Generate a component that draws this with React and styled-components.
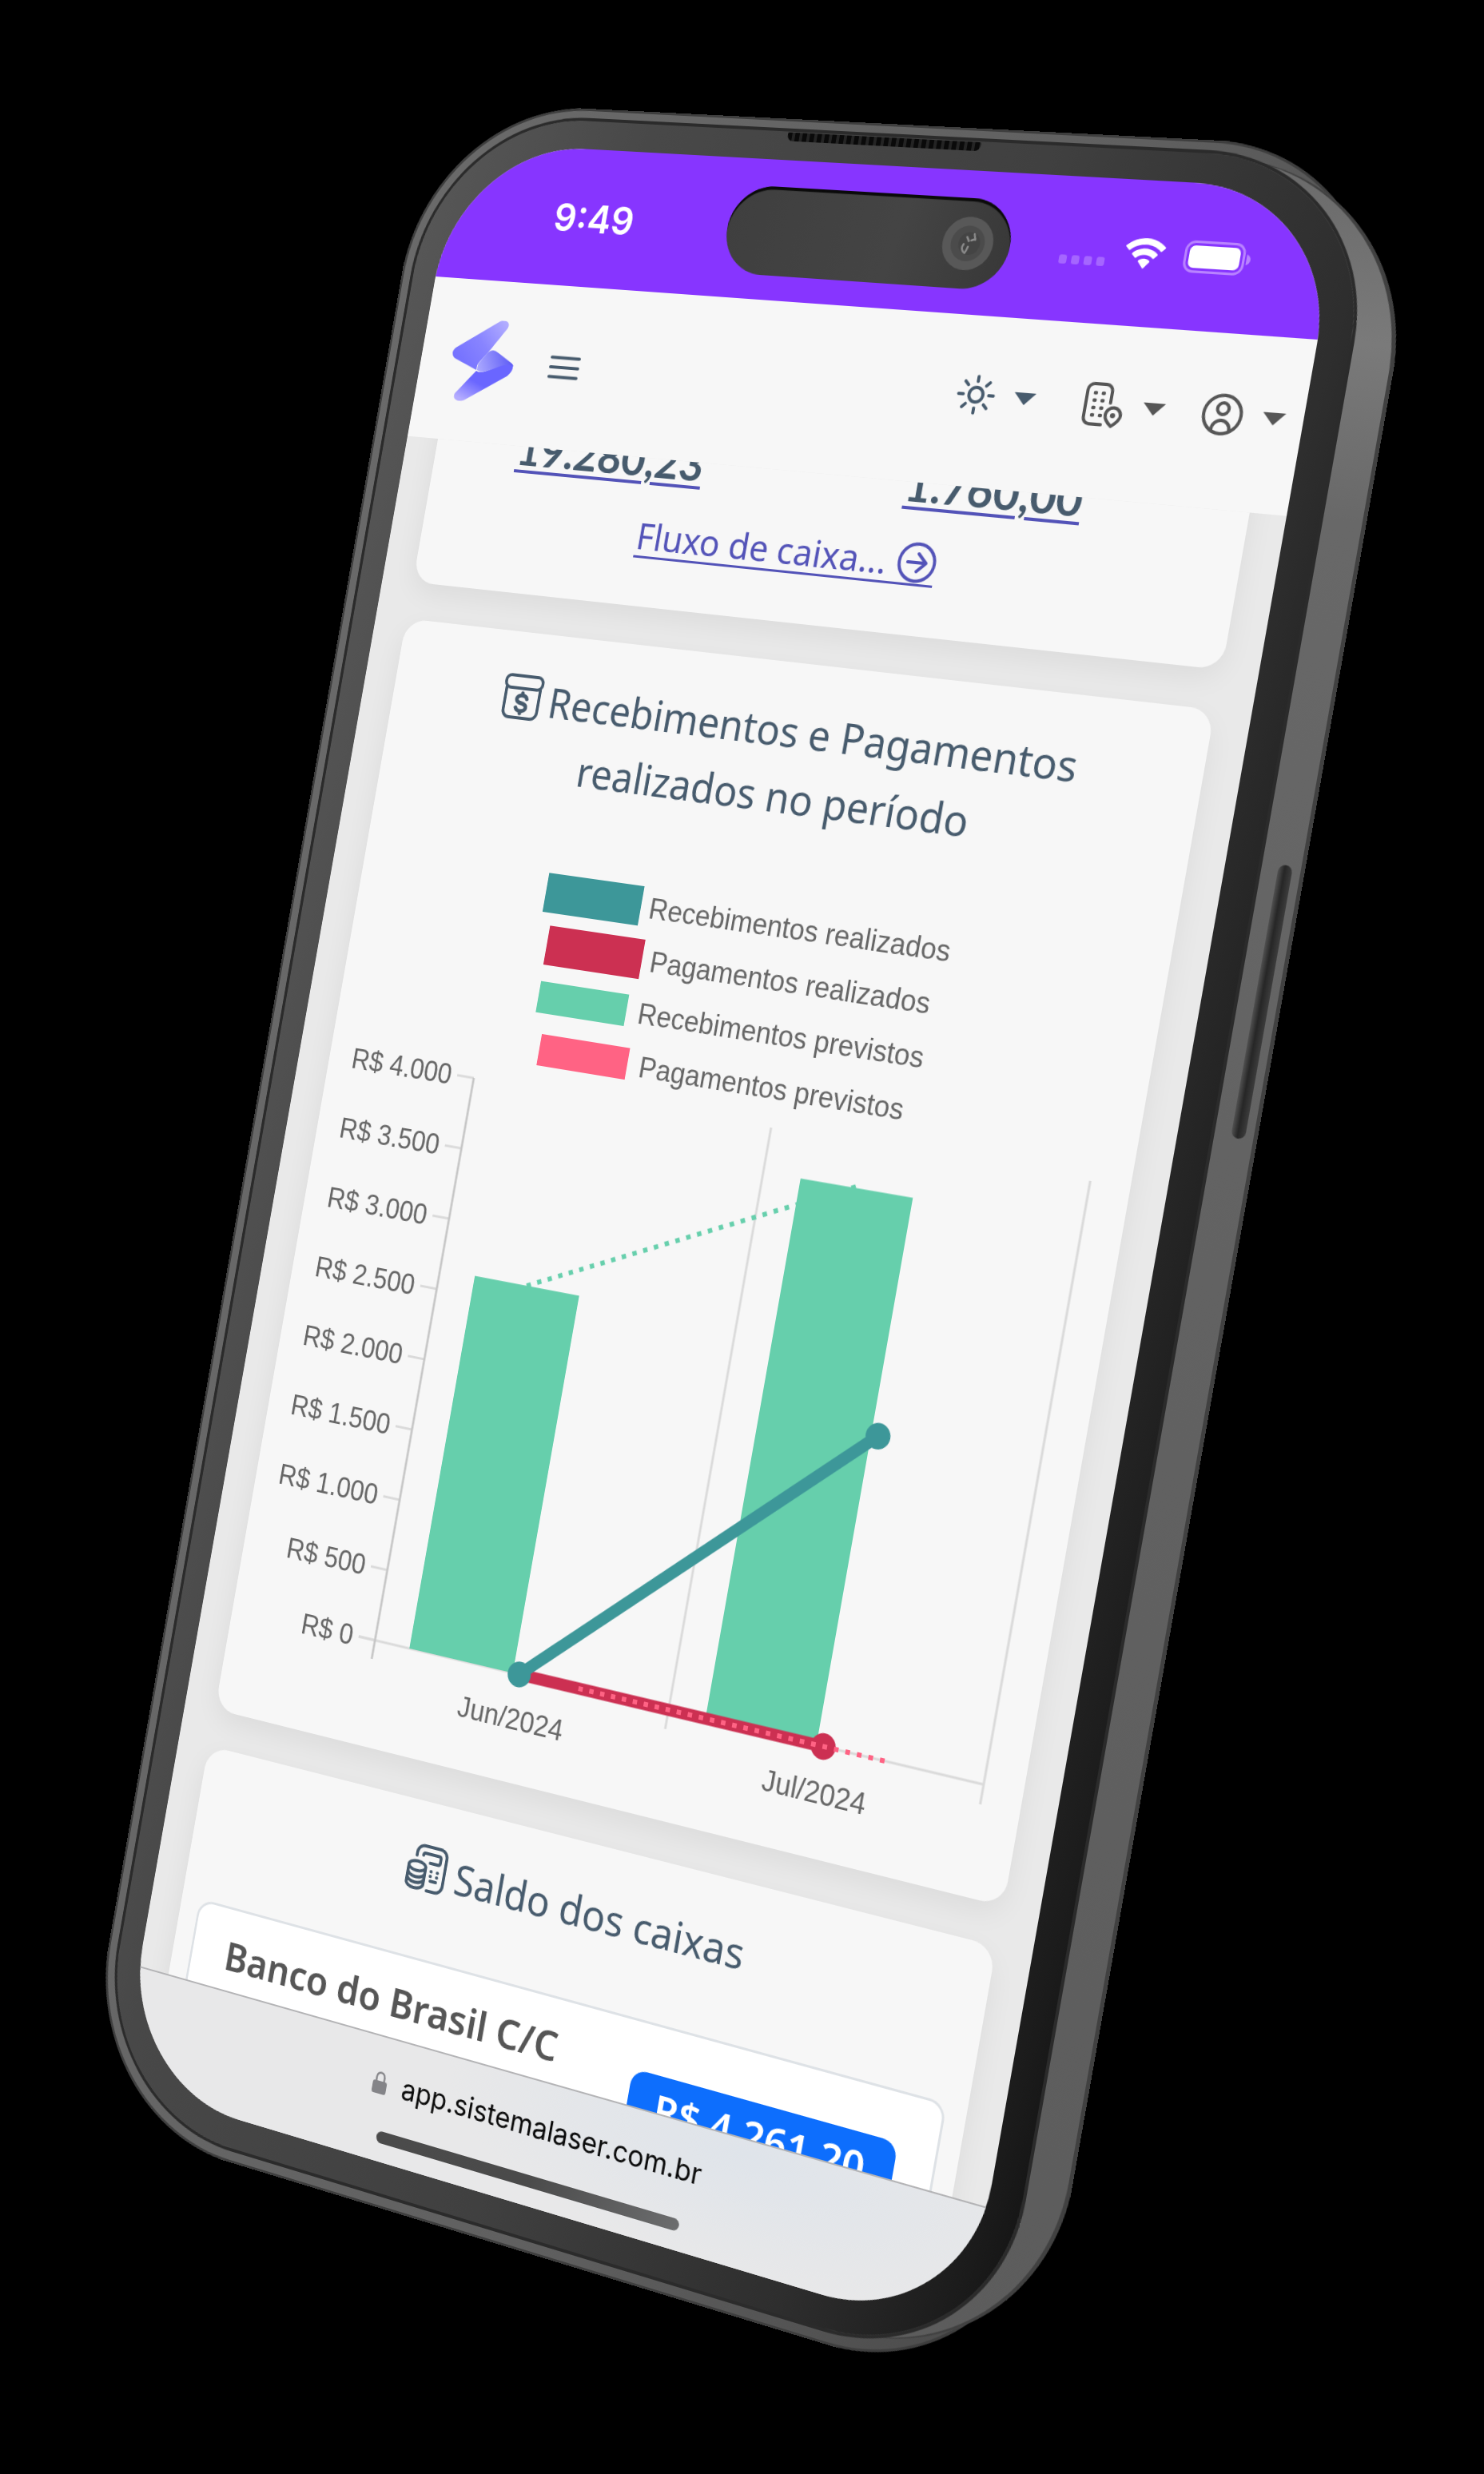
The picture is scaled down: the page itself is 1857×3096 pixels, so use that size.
import React from "react";
import styled, { createGlobalStyle } from "styled-components";

const GlobalStyle = createGlobalStyle`
  *, *::before, *::after { box-sizing: border-box; }
  html, body { margin: 0; background: #000; }
  body { overflow-x: hidden; }
  button { font: inherit; border: 0; background: none; padding: 0; color: inherit; cursor: pointer; }
  h2, ul, p { margin: 0; padding: 0; }
`;

const uiFont = `"Noto Sans", "Open Sans", sans-serif`;
const figureFont = `Lato, "Noto Sans", sans-serif`;
const systemFont = `Inter, Roboto, sans-serif`;
const chartFont = `"Liberation Sans", Arial, sans-serif`;

/* ---------- device ---------- */

const Page = styled.main`
  min-height: 100vh;
  display: grid;
  justify-content: center;
  padding: 130px 0;
  background: #000;
`;

const Stage = styled.div`
  width: 1633px;
  height: 2836px;
`;

/* Perspective of the phone; the screen's top left corner is the origin. */
const Device = styled.div`
  position: relative;
  width: max-content;
  padding: 16px 23px 18px 17px;
  border-radius: 230px;
  background: linear-gradient(97deg, #6a6a6a 0%, #606060 60%, #4c4c4c 97%, #444 100%);
  box-shadow: inset 0 0 0 3px #3e3e3e;
  transform-origin: 0 0;
  transform: translate(-112px, -130px)
    matrix3d(0.80254, 0.032502, 0, -0.000081188, -0.166263, 0.950971, 0, 0.0000010422, 0, 0, 1, 0, 574.43, 177.68, 0, 0.999816)
    translate(-50px, -52px);
  transform-style: flat;
`;

const Side = styled.div`
  position: absolute;
  z-index: -1;
  inset: 20px -33px 22px 300px;
  border-radius: 0 244px 244px 0;
  background: linear-gradient(180deg, #6a6a6a 0%, #7a7a7a 8%, #686868 16%, #626262 50%, #5c5c5c 100%);
  box-shadow: inset -5px 0 0 0 #414141;
`;

const PowerButton = styled.div`
  position: absolute;
  right: -18px;
  top: 846px;
  width: 17px;
  height: 324px;
  border-radius: 9px;
  background: linear-gradient(90deg, #505050, #262626 45%, #3c3c3c);
`;

const Glass = styled.div`
  position: relative;
  padding: 36px 40px 38px 33px;
  border-radius: 214px;
  background: linear-gradient(96deg, #575757 0%, #484848 20%, #404040 55%, #2e2e2e 82%, #1b1b1b 96%, #141414 100%);
  box-shadow: 0 0 0 4px #2b2b2b;
`;

const Speaker = styled.div`
  position: absolute;
  left: 493px;
  top: 1px;
  width: 258px;
  height: 11px;
  border-radius: 2px 2px 8px 8px;
  background: repeating-linear-gradient(90deg, #0a0a0a 0 6px, #242424 6px 10px);
`;

const Screen = styled.div`
  position: relative;
  display: flex;
  flex-direction: column;
  width: 1179px;
  height: 2562px;
  overflow: hidden;
  border-radius: 184px;
  background: #e9e9e9;
`;

/* ---------- status bar ---------- */

const StatusBar = styled.div`
  flex: none;
  height: 177px;
  padding: 0 98px 0 156px;
  display: flex;
  align-items: center;
  justify-content: space-between;
  background: #8735ff;
  color: #fff;
  font: 600 50px/60px ${systemFont};
`;

const StatusIcons = styled.div`
  display: flex;
  align-items: center;
  gap: 24px;
`;

const Signal = styled.div`
  display: flex;
  gap: 6px;
  margin-top: 26px;
`;

const SignalDot = styled.i`
  width: 10px;
  height: 11px;
  border-radius: 3px;
  background: #a566ff;
`;

const Island = styled.div`
  position: absolute;
  top: 34px;
  left: 400px;
  width: 378px;
  height: 112px;
  padding-right: 22px;
  display: flex;
  align-items: center;
  justify-content: flex-end;
  border-radius: 56px;
  background: linear-gradient(100deg, #3f3f3f, #444 60%, #383838);
  box-shadow: inset 0 4px 1px #0a0a0a;
`;

/* ---------- app header ---------- */

const AppHeader = styled.header`
  flex: none;
  height: 210px;
  padding: 0 22px 0 44px;
  display: flex;
  align-items: center;
  background: #f7f7f7;
`;

const MenuButton = styled.button`
  display: flex;
  margin-left: 50px;
  color: #475b6d;
`;

const HeaderActions = styled.div`
  display: flex;
  gap: 46px;
  margin: 0 0 16px auto;
`;

const ActionButton = styled.button`
  display: flex;
  align-items: center;
  gap: 24px;
  color: ${(p) => (p.$accent ? "#475b6d" : "#565656")};
  padding-right: ${(p) => (p.$accent ? "16px" : "0")};
`;

const Caret = styled.span`
  border: 14px solid transparent;
  border-top: 15px solid currentColor;
  border-bottom: 0;
`;

/* ---------- content ---------- */

const Viewport = styled.div`
  flex: 1;
  min-height: 0;
  overflow: hidden;
`;

const Feed = styled.div`
  display: flex;
  flex-direction: column;
  gap: 48px;
  margin-top: -138px;
  padding: 0 45px;
`;

const Card = styled.section`
  padding: ${(p) => p.$pad || "44px 0 43px"};
  border-radius: 30px;
  background: #f7f7f7;
  box-shadow: 0 12px 36px rgba(0, 0, 0, 0.06);
  text-align: center;
`;

const CardTitle = styled.h2`
  color: #475b6d;
  font: 400 52px/82px ${uiFont};

  svg {
    width: 58px;
    height: 60px;
    margin-right: 10px;
    vertical-align: -8px;
  }
`;

const Totals = styled.div`
  display: flex;
  justify-content: space-between;
  padding: 0 133px 0 117px;
`;

const TotalLink = styled.a`
  color: #475b6d;
  font: 700 58px/80px ${figureFont};
  text-decoration: underline #5353b8 4px;
  text-underline-offset: 6px;
`;

const FlowLink = styled.a`
  display: inline-flex;
  align-items: center;
  gap: 14px;
  margin-top: 30px;
  border-bottom: 3px solid #5353b8;
  color: #5353b8;
  font: 400 46px/52px ${uiFont};
  text-decoration: none;
`;

const Legend = styled.ul`
  margin-top: 99px;
  display: flex;
  flex-direction: column;
  align-items: center;
  gap: 30px;
  list-style: none;
`;

const LegendItem = styled.li`
  display: flex;
  gap: 18px;
  height: 36px;
  color: #666;
  font: 400 36px/40px ${chartFont};

  &::before {
    content: "";
    width: 120px;
    height: 36px;
    background: ${(p) => p.$color};
    box-shadow: 0 0 0 ${(p) => p.$ring} ${(p) => p.$color};
  }
`;

const Plot = styled.svg`
  display: block;
  width: 100%;

  text {
    fill: #666;
    font: 400 36px ${chartFont};
  }
`;

const AccountRow = styled.div`
  display: flex;
  align-items: flex-start;
  justify-content: space-between;
  height: 200px;
  margin: 69px 26px 0;
  padding: 18px 48px;
  border: 3px solid #dee2e6;
  border-radius: 22px;
  background: #fff;
  font: 600 51px/78px ${uiFont};
`;

const AccountName = styled.span`
  color: #565656;
`;

const Balance = styled.span`
  margin-top: 40px;
  padding: 0 36px;
  border-radius: 20px;
  background: #0d6efd;
  color: #fff;
`;

/* ---------- browser bar ---------- */

const BrowserBar = styled.footer`
  flex: none;
  height: 156px;
  padding-top: 34px;
  display: flex;
  flex-direction: column;
  align-items: center;
  gap: 38px;
  border-top: 2px solid #b4b4b6;
  background: radial-gradient(ellipse 420px 150px at 74% 10%, #dfe4ea, #e8e8e9);
`;

const Address = styled.div`
  display: flex;
  align-items: center;
  gap: 22px;
  color: #0a0a0a;
  font: 400 36px/44px ${systemFont};
`;

const HomeIndicator = styled.div`
  width: 422px;
  height: 15px;
  border-radius: 8px;
  background: linear-gradient(100deg, #4b4b4b, #4a4a4a 50%, #6c6d6e);
`;

/* ---------- drawings ---------- */

const Camera = () => (
  <svg width="66" height="66" viewBox="0 0 66 66">
    <circle cx="33" cy="33" r="33" fill="#585858" />
    <circle cx="33" cy="33" r="22" fill="#4b4b4b" />
    <circle cx="35" cy="33" r="14" fill="#444" />
    <path d="M31 25l3 5M40 21l2 7M37 29l5-2M28 34c-3 5-1 9 3 11M34 37l-2 6" stroke="#8c8c8c" strokeWidth="2.500" strokeLinecap="round" fill="none" />
  </svg>
);

const Wifi = () => (
  <svg width="50" height="37" viewBox="0 0 50 37" fill="#fff">
    <path d="M25 0C15.500 0 6.800 3.700.3 9.800c-.4.400-.4 1 0 1.400l4 4.100c.4.400 1 .4 1.400 0C10.800 10.600 17.600 7.800 25 7.800s14.200 2.800 19.300 7.500c.4.400 1 .4 1.400 0l4-4.100c.4-.4.4-1 0-1.400C43.200 3.700 34.500 0 25 0z" />
    <path d="M25 12.600c-6.100 0-11.700 2.300-15.900 6.200-.4.400-.4 1 0 1.400l4 4c.4.400 1 .4 1.400 0 2.800-2.500 6.500-4 10.500-4s7.700 1.500 10.500 4c.4.400 1 .4 1.400 0l4-4c.4-.4.4-1 0-1.400-4.200-3.900-9.800-6.200-15.900-6.200z" />
    <path d="M25 24.800c-2.700 0-5.200 1-7.100 2.600-.4.400-.4 1 0 1.400l6.400 7.600c.4.400 1 .4 1.400 0l6.400-7.600c.4-.4.400-1 0-1.400-1.900-1.600-4.400-2.600-7.100-2.600z" />
  </svg>
);

const Battery = () => (
  <svg width="82" height="39" viewBox="0 0 82 39">
    <rect x="1.500" y="1.500" width="72" height="36" rx="11" fill="none" stroke="#b983ff" strokeWidth="3" />
    <rect x="6" y="6" width="63" height="27" rx="7" fill="#fff" />
    <path d="M77 13c3 1 5 3.500 5 6.500s-2 5.500-5 6.500z" fill="#b983ff" />
  </svg>
);

const Logo = () => (
  <svg width="92" height="108" viewBox="0 0 92 108">
    <defs>
      <linearGradient id="lgTop" x1="70" y1="0" x2="10" y2="60" gradientUnits="userSpaceOnUse">
        <stop offset="0" stopColor="#b3aeff" />
        <stop offset="0.500" stopColor="#8884ff" />
        <stop offset="1" stopColor="#7370ff" />
      </linearGradient>
      <linearGradient id="lgMid" x1="40" y1="64" x2="84" y2="42" gradientUnits="userSpaceOnUse">
        <stop offset="0" stopColor="#aba9ff" />
        <stop offset="1" stopColor="#5e5cf5" />
      </linearGradient>
      <linearGradient id="lgLow" x1="50" y1="60" x2="32" y2="108" gradientUnits="userSpaceOnUse">
        <stop offset="0" stopColor="#6a66ff" />
        <stop offset="0.450" stopColor="#6a66ff" />
        <stop offset="1" stopColor="#b4acff" />
      </linearGradient>
    </defs>
    <path d="M39 67C46 72 62 62 72 58c8-3 16-6 18-2 2 5-1 11-6 15L29 106c-8 4-19 0-15-8z" fill="url(#lgLow)" />
    <path d="M51 43c4-5 9-5 14-2l20 11c4 2 6 4 6 6-6-4-16-1-24 3-10 4-19 9-27 5-2-8 4-14 11-23z" fill="url(#lgMid)" />
    <path d="M61 1c8-4 17 1 12 9L51 43c-7 9-14 15-12 23L5 53C-1 49-1 43 4 39z" fill="url(#lgTop)" />
  </svg>
);

const MenuIcon = () => (
  <svg width="43" height="30" viewBox="0 0 43 30" stroke="currentColor" strokeWidth="4" strokeLinecap="round">
    <path d="M2 2.500H41M2 15H41M2 27.500H41" />
  </svg>
);

const SunIcon = () => (
  <svg width="50" height="50" viewBox="0 0 50 50" fill="none" stroke="currentColor" strokeWidth="4" strokeLinecap="round">
    <circle cx="25" cy="25" r="9" />
    {[0, 45, 90, 135, 180, 225, 270, 315].map((angle) => (
      <path key={angle} d="M25 2.500V8.500" transform={`rotate(${angle} 25 25)`} />
    ))}
  </svg>
);

const BuildingIcon = () => (
  <svg width="50" height="54" viewBox="0 0 50 54" fill="none" stroke="currentColor" strokeWidth="4" strokeLinecap="round" strokeLinejoin="round">
    <path d="M25 51H10a8 8 0 0 1-8-8V10a8 8 0 0 1 8-8h15a8 8 0 0 1 8 8v14" />
    <path d="M12 13h1M22 13h1M12 22h1M22 22h1M12 31h1M22 31h1M12 40h1M22 40h1" strokeWidth="4.500" />
    <path d="M38 52c-4-3-9-8-9-13a9.500 9.500 0 0 1 19 0c0 5-6 10-10 13z" />
    <path d="M38 39h.5" strokeWidth="6" />
  </svg>
);

const UserIcon = () => (
  <svg width="50" height="50" viewBox="0 0 50 50" fill="none" stroke="currentColor" strokeWidth="4">
    <circle cx="25" cy="25" r="23" />
    <circle cx="25" cy="18" r="7" />
    <path d="M14 45V43a11 11 0 0 1 22 0v2" />
  </svg>
);

const ArrowCircleIcon = () => (
  <svg width="50" height="50" viewBox="0 0 50 50" fill="none" stroke="currentColor" strokeWidth="4" strokeLinecap="round" strokeLinejoin="round">
    <circle cx="25" cy="25" r="23" />
    <path d="M13 25H37M26 14L37 25L26 36" />
  </svg>
);

const CashBoxIcon = () => (
  <svg viewBox="0 0 58 60" fill="none" stroke="currentColor" strokeWidth="4" strokeLinecap="round" strokeLinejoin="round">
    <rect x="3" y="3" width="52" height="16" rx="7" />
    <path d="M5 19V48a9 9 0 0 0 9 9H44a9 9 0 0 0 9-9V19" />
    <path d="M36 32c-1-3-4-4-7-4-4 0-7 2-7 5 0 7 14 3 14 10 0 3-3 5-7 5-3 0-6-1-7-4M29 25v3M29 48v3" strokeWidth="5" />
  </svg>
);

const CoinsIcon = () => (
  <svg viewBox="0 0 58 60" fill="none" stroke="currentColor" strokeWidth="4" strokeLinecap="round" strokeLinejoin="round">
    <path d="M11 16V12a10 10 0 0 1 10-10H43a10 10 0 0 1 10 10V47a10 10 0 0 1-10 10H32" />
    <path d="M20 14c0-2 1-3 3-3H42c2 0 3 1 3 3v5c0 2-1 3-3 3H31" />
    <path d="M34 32h.5M43 32h.5M35 44h8M34 38h.5M43 38h.5" />
    <ellipse cx="14" cy="29" rx="12" ry="6" />
    <path d="M2 29V50c0 4 5 7 12 7s12-3 12-7V29M2 36c0 4 5 7 12 7s12-3 12-7M2 43c0 4 5 7 12 7s12-3 12-7" />
  </svg>
);

const LockIcon = () => (
  <svg width="20" height="29" viewBox="0 0 20 29">
    <path d="M4.500 14V8a5.500 5.500 0 0 1 11 0v6" fill="none" stroke="#848488" strokeWidth="2.500" />
    <rect y="13" width="20" height="16" rx="3" fill="#848488" />
  </svg>
);

/* ---------- chart ---------- */

const series = [
  { name: "Recebimentos realizados", color: "#3d9799", ring: "7px" },
  { name: "Pagamentos realizados", color: "#cc3052", ring: "7px" },
  { name: "Recebimentos previstos", color: "#66cfac", ring: "2px" },
  { name: "Pagamentos previstos", color: "#ff6384", ring: "2px" },
];

const axisLabels = ["R$ 4.000", "R$ 3.500", "R$ 3.000", "R$ 2.500", "R$ 2.000", "R$ 1.500", "R$ 1.000", "R$ 500", "R$ 0"];
const top = 31;
const base = 758;
const step = (base - top) / 8;
const valueY = (value) => base - (value / 4000) * (base - top);

function Chart() {
  return (
    <Plot viewBox="0 0 1089 850" role="img" aria-label="Recebimentos e pagamentos por mês">
      <g stroke="#dadada" strokeWidth="3">
        <path d={`M625 ${top}V${base + 24}M1039 ${top}V${base + 24}M187 ${base}H1039`} />
        {axisLabels.map((label, i) => (
          <path key={label} d={`M187 ${top + i * step}h24`} />
        ))}
      </g>
      <path d={`M211 ${top}V${base + 24}`} stroke="#c6c6c6" strokeWidth="3" />
      {axisLabels.map((label, i) => (
        <text key={label} x="179" y={top + 13 + i * step} textAnchor="end">
          {label}
        </text>
      ))}
      <path d={`M335 ${valueY(2640)}L749 ${valueY(3705)}`} stroke="#66cfac" strokeWidth="6" strokeDasharray="6 9" />
      <rect x="261" y={valueY(2640)} width="148" height={base - valueY(2640)} fill="#66cfac" />
      <rect x="675" y={valueY(3695)} width="148" height={base - valueY(3695)} fill="#66cfac" />
      <path d={`M418 ${base}H832`} stroke="#cc3052" strokeWidth="15" />
      <circle cx="832" cy={base} r="16" fill="#cc3052" />
      <path d={`M501 ${base}H915`} stroke="#ff6384" strokeWidth="6" strokeDasharray="6 9" />
      <path d={`M418 ${base}L832 ${valueY(2095)}`} stroke="#3d9799" strokeWidth="15" />
      <circle cx="418" cy={base} r="16" fill="#3d9799" />
      <circle cx="832" cy={valueY(2095)} r="16" fill="#3d9799" />
      <text x="416" y="827" textAnchor="middle">Jun/2024</text>
      <text x="830" y="827" textAnchor="middle">Jul/2024</text>
    </Plot>
  );
}

export default function App() {
  return (
    <>
      <GlobalStyle />
      <Page>
        <Stage>
          <Device>
            <Side />
            <PowerButton />
            <Glass>
              <Speaker />
              <Screen>
                <StatusBar>
                  <span>9:49</span>
                  <StatusIcons>
                    <Signal>
                      <SignalDot />
                      <SignalDot />
                      <SignalDot />
                      <SignalDot />
                    </Signal>
                    <Wifi />
                    <Battery />
                  </StatusIcons>
                </StatusBar>
                <Island>
                  <Camera />
                </Island>

                <AppHeader>
                  <Logo />
                  <MenuButton aria-label="Menu">
                    <MenuIcon />
                  </MenuButton>
                  <HeaderActions>
                    <ActionButton $accent aria-label="Tema">
                      <SunIcon />
                      <Caret />
                    </ActionButton>
                    <ActionButton aria-label="Empresa">
                      <BuildingIcon />
                      <Caret />
                    </ActionButton>
                    <ActionButton aria-label="Conta">
                      <UserIcon />
                      <Caret />
                    </ActionButton>
                  </HeaderActions>
                </AppHeader>

                <Viewport>
                  <Feed>
                    <Card $pad="100px 74px 61px 0">
                      <Totals>
                        <TotalLink href="#receber">19.280,23</TotalLink>
                        <TotalLink href="#pagar">1.760,00</TotalLink>
                      </Totals>
                      <FlowLink href="#fluxo">
                        Fluxo de caixa...
                        <ArrowCircleIcon />
                      </FlowLink>
                    </Card>

                    <Card>
                      <CardTitle>
                        <CashBoxIcon />
                        Recebimentos e Pagamentos
                        <br />
                        realizados no período
                      </CardTitle>
                      <Legend>
                        {series.map((s) => (
                          <LegendItem key={s.name} $color={s.color} $ring={s.ring}>
                            {s.name}
                          </LegendItem>
                        ))}
                      </Legend>
                      <Chart />
                    </Card>

                    <Card>
                      <CardTitle>
                        <CoinsIcon />
                        Saldo dos caixas
                      </CardTitle>
                      <AccountRow>
                        <AccountName>Banco do Brasil C/C</AccountName>
                        <Balance>R$ 4.261,20</Balance>
                      </AccountRow>
                    </Card>
                  </Feed>
                </Viewport>

                <BrowserBar>
                  <Address>
                    <LockIcon />
                    app.sistemalaser.com.br
                  </Address>
                  <HomeIndicator />
                </BrowserBar>
              </Screen>
            </Glass>
          </Device>
        </Stage>
      </Page>
    </>
  );
}
